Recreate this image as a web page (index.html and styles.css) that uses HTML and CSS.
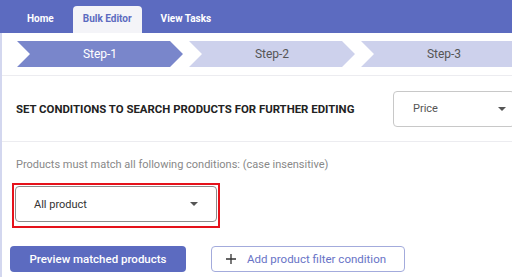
FILE: index.html
```html
<!DOCTYPE html>
<html lang="en">
<head>
    <meta charset="UTF-8">
    <meta name="viewport" content="width=device-width, initial-scale=1.0">
    <title>Bulk Editor</title>
    <link rel="stylesheet" href="styles.css">
</head>
<body>
    <div class="nav">
        <a class="tab" href="#">Home</a>
        <a class="tab active" href="#">Bulk Editor</a>
        <a class="tab" href="#">View Tasks</a>
    </div>
    <div class="main">
        <div class="steps">
            <div class="step current">Step-1</div>
            <div class="step">Step-2</div>
            <div class="step">Step-3</div>
        </div>
        <div class="title-row">
            <h3 class="title">SET CONDITIONS TO SEARCH PRODUCTS FOR FURTHER EDITING</h3>
            <div class="select price-select">
                <span>Price</span>
                <span class="caret"></span>
            </div>
        </div>
        <div class="conditions">
            <p class="hint">Products must match all following conditions: (case insensitive)</p>
            <div class="highlight">
                <div class="select product-select">
                    <span>All product</span>
                    <span class="caret"></span>
                </div>
            </div>
            <div class="actions">
                <button type="button" class="btn btn-primary">Preview matched products</button>
                <button type="button" class="btn btn-outline">
                    <svg width="10" height="10" viewBox="0 0 10 10"><path d="M5 0v10M0 5h10" stroke="#333" stroke-width="1.3"/></svg>
                    Add product filter condition
                </button>
            </div>
        </div>
    </div>
</body>
</html>
```

FILE: styles.css
```css
body {
    margin: 0;
    font-family: Roboto, "Liberation Sans", Arial, sans-serif;
    background-color: #fff;
    overflow: hidden;
}

.nav {
    height: 33px;
    background-color: #5c6bc0;
    display: flex;
    align-items: flex-end;
    padding-left: 17px;
    gap: 9px;
}

.tab {
    height: 27px;
    line-height: 26px;
    padding: 0 10px;
    color: #fff;
    font-size: 10px;
    font-weight: 700;
    text-decoration: none;
    border-radius: 4px 4px 0 0;
}

.tab.active {
    background-color: #f4f4f8;
    color: #5c6bc0;
}

.main {
    border-left: 2px solid #d3d7ef;
    height: 250px;
}

.steps {
    display: flex;
    gap: 6px;
    padding: 8px 0 8px 15px;
    border-bottom: 1px solid #ececf0;
}

.step {
    flex: 0 0 166px;
    height: 26px;
    line-height: 26px;
    text-align: center;
    font-size: 12px;
    color: #555;
    background-color: #cdd1ec;
    clip-path: polygon(0 0, calc(100% - 13px) 0, 100% 50%, calc(100% - 13px) 100%, 0 100%, 13px 50%);
}

.step.current {
    background-color: #7986cb;
    color: #fff;
}

.title-row {
    display: flex;
    align-items: center;
    height: 65px;
    padding-left: 14px;
    border-bottom: 1px solid #ececf0;
}

.title {
    flex: 0 0 377px;
    margin: 0;
    font-size: 11.4px;
    font-weight: 700;
    color: #222;
    white-space: nowrap;
}

.select {
    display: flex;
    align-items: center;
    justify-content: space-between;
    box-sizing: border-box;
    height: 36px;
    border: 1px solid #c8c8c8;
    border-radius: 4px;
    font-size: 11px;
    color: #555;
    background-color: #fff;
}

.price-select {
    flex: 0 0 122px;
    padding: 0 8px 0 19px;
}

.caret {
    width: 0;
    height: 0;
    border-left: 4px solid transparent;
    border-right: 4px solid transparent;
    border-top: 4px solid #555;
}

.conditions {
    padding: 16px 0 0 10px;
}

.hint {
    margin: 0 0 0 4px;
    font-size: 11px;
    color: #888;
    line-height: 14px;
}

.highlight {
    width: 202px;
    margin: 11px 0 0 0;
    padding: 1px 1px 4px;
    border: 2px solid #e5121b;
}

.product-select {
    border-color: #8c8c8c;
    padding: 0 18px 0 18px;
    color: #333;
}

.actions {
    display: flex;
    gap: 25px;
    margin: 18px 0 0 -2px;
}

.btn {
    height: 26px;
    padding: 0;
    border-radius: 4px;
    font-family: inherit;
    cursor: pointer;
}

.btn-primary {
    width: 176px;
    border: none;
    background-color: #5c6bc0;
    color: #fff;
    font-size: 11.5px;
    font-weight: 500;
}

.btn-outline {
    width: 194px;
    display: flex;
    align-items: center;
    gap: 11px;
    padding-left: 14px;
    border: 1px solid #a3abdc;
    background-color: #fff;
    color: #6873c6;
    font-size: 11.5px;
}
```
